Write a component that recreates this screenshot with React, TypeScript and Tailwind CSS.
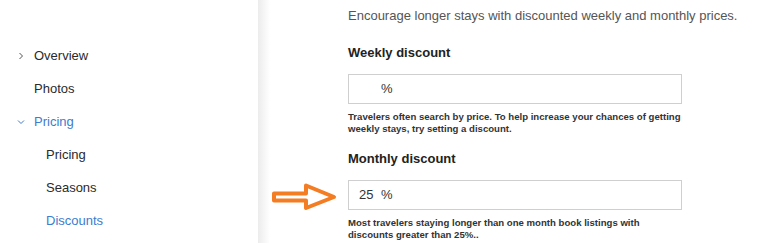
/**
 * Listing editor: discounts page
 *
 * Left-hand navigation with the discounts section in the content area.
 */

const font = "font-['Liberation_Sans',Arial,sans-serif]"

function ChevronRight() {
  return (
    <svg width="6" height="8" viewBox="0 0 6 8" className="absolute left-[18px]">
      <path d="M1.5 1 L4.5 4 L1.5 7" fill="none" stroke="#555" strokeWidth="1" />
    </svg>
  )
}

function ChevronDown() {
  return (
    <svg width="8" height="6" viewBox="0 0 8 6" className="absolute left-[17px]">
      <path d="M1 1.5 L4 4.5 L7 1.5" fill="none" stroke="#3d7ccf" strokeWidth="1" />
    </svg>
  )
}

/** Sidebar item: one row in the left-hand navigation. */
function NavItem({
  label,
  active,
  sub,
  icon,
}: {
  label: string
  active?: boolean
  sub?: boolean
  icon?: React.ReactNode
}) {
  return (
    <div
      className={`relative flex h-[33px] items-center text-[13px] ${sub ? 'pl-[46px]' : 'pl-[34px]'} ${
        active ? 'text-[#3d7ccf]' : 'text-[#2a2a2a]'
      }`}
    >
      {icon}
      {label}
    </div>
  )
}

/** Outline arrow pointing at the monthly discount field. */
function Arrow() {
  return (
    <svg width="66" height="28" viewBox="0 0 66 28" className="absolute left-[-76px] top-[3px]">
      <polygon
        points="2,10.5 34,10.5 34,2.5 62,14 34,25 34,17.5 2,17.5"
        fill="#fff"
        stroke="#f47c22"
        strokeWidth="4"
        strokeLinejoin="round"
      />
    </svg>
  )
}

/** Discount field with label, percent input and help text. */
function DiscountField({
  label,
  value,
  help,
  arrow,
}: {
  label: string
  value?: string
  help: React.ReactNode
  arrow?: boolean
}) {
  return (
    <div>
      <h3 className="h-[20px] text-[13px] leading-[20px] font-bold text-[#222]">{label}</h3>
      <div className="relative mt-[11px]">
        {arrow && <Arrow />}
        <div className="flex h-[30px] w-[334px] items-center border border-[#cfcfcf] bg-white text-[13px] text-[#333]">
          <span className="w-[23px] pl-[10px]">{value}</span>
          <span className="ml-[9px]">%</span>
        </div>
      </div>
      <p className="mt-[7px] text-[9.6px] leading-[12px] font-bold text-[#333]">{help}</p>
    </div>
  )
}

export default function App() {
  return (
    <main className={`flex h-[243px] w-[777px] overflow-hidden bg-white ${font}`}>
      {/* 사이드바 */}
      <nav className="w-[258px] shrink-0 pt-[39px]">
        <NavItem label="Overview" icon={<ChevronRight />} />
        <NavItem label="Photos" />
        <NavItem label="Pricing" active icon={<ChevronDown />} />
        <NavItem label="Pricing" sub />
        <NavItem label="Seasons" sub />
        <NavItem label="Discounts" active sub />
      </nav>

      {/* 사이드바 그림자 */}
      <div className="w-[12px] shrink-0 bg-gradient-to-r from-[#ececec] to-white" />

      {/* 본문 */}
      <section className="flex-1 pl-[78px] pt-[6px]">
        <p className="h-[20px] text-[13px] leading-[20px] text-[#555]">
          Encourage longer stays with discounted weekly and monthly prices.
        </p>
        <div className="mt-[17px]">
          <DiscountField
            label="Weekly discount"
            help={
              <>
                Travelers often search by price. To help increase your chances of getting
                <br />
                weekly stays, try setting a discount.
              </>
            }
          />
        </div>
        <div className="mt-[14px]">
          <DiscountField
            label="Monthly discount"
            value="25"
            arrow
            help={
              <>
                Most travelers staying longer than one month book listings with
                <br />
                discounts greater than 25%..
              </>
            }
          />
        </div>
      </section>
    </main>
  )
}
